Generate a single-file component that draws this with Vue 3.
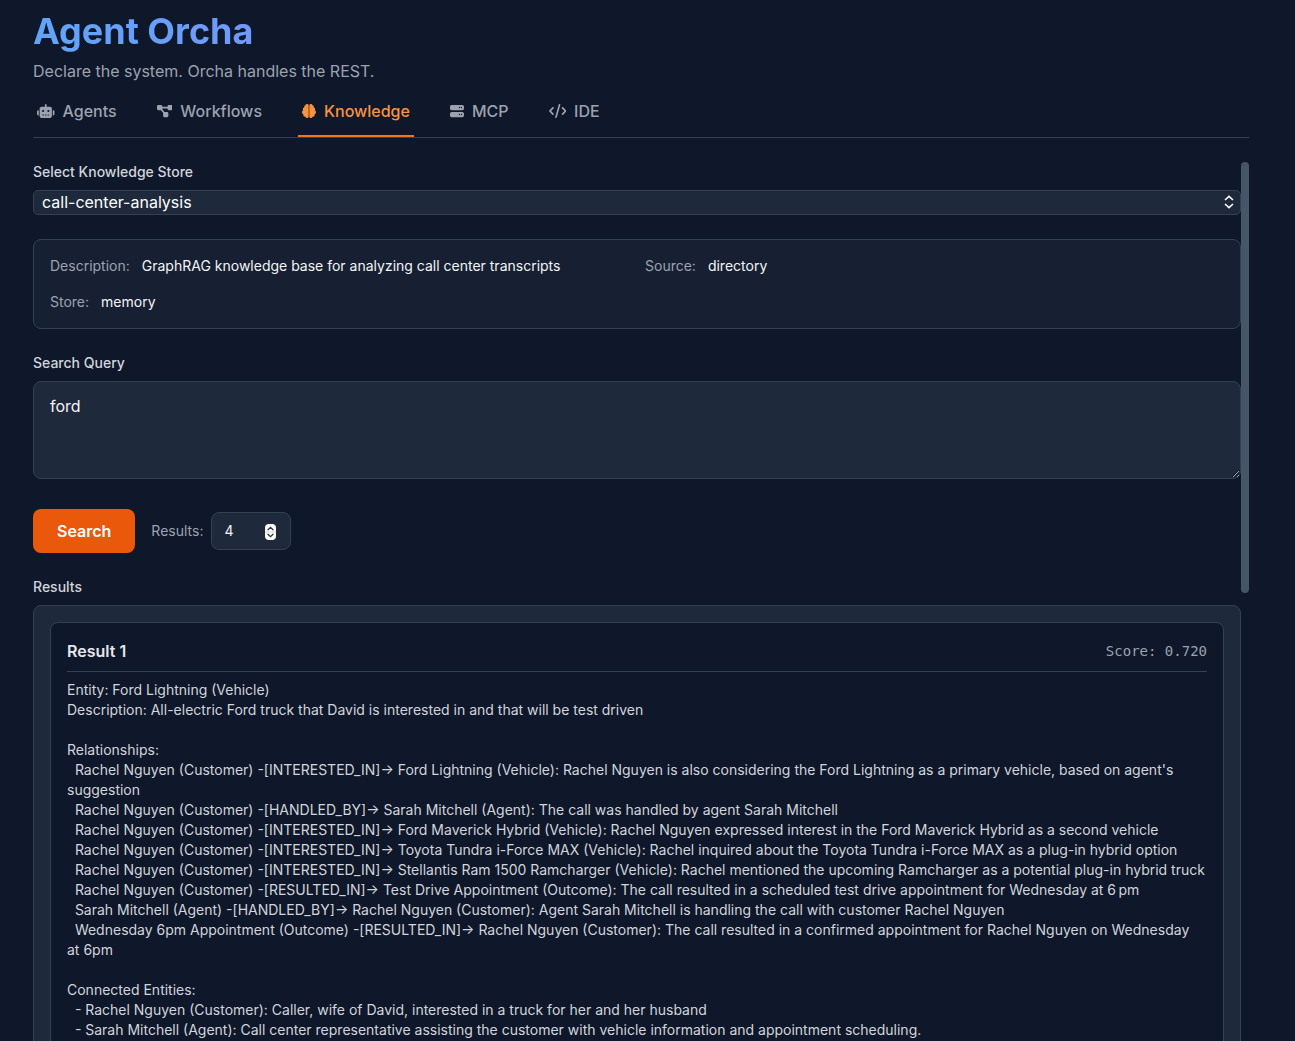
<template>
  <div class="page">
    <header class="header">
      <h1>Agent Orcha</h1>
      <p class="tagline">Declare the system. Orcha handles the REST.</p>
    </header>

    <nav class="tabs">
      <button
        v-for="tab in tabs"
        :key="tab.name"
        type="button"
        class="tab"
        :class="{ active: tab.name === activeTab }"
        @click="activeTab = tab.name"
      >
        <svg class="tab-icon" :viewBox="`0 0 ${tab.width} 512`" aria-hidden="true">
          <path v-if="tab.name === 'Knowledge'" class="brain-gap" d="M230 20H282V492H230Z" />
          <path :d="tab.path" />
        </svg>
        <span>{{ tab.name }}</span>
      </button>
    </nav>

    <div class="body">
      <main class="content">
        <section class="group">
          <label for="store">Select Knowledge Store</label>
          <div class="select-wrap">
            <select id="store" v-model="store">
              <option>call-center-analysis</option>
            </select>
            <svg class="select-arrows" viewBox="0 0 10 14" aria-hidden="true">
              <path d="M1 5 5 1.400 9 5M1 9 5 12.600 9 9" />
            </svg>
          </div>
        </section>

        <section class="info">
          <div v-for="item in info" :key="item.label" class="info-item">
            <span class="info-label">{{ item.label }}</span>
            <span>{{ item.value }}</span>
          </div>
        </section>

        <section class="group">
          <label for="query">Search Query</label>
          <textarea id="query" v-model="query"></textarea>
        </section>

        <div class="actions">
          <button type="button" class="search">Search</button>
          <label for="count" class="count-label">Results:</label>
          <div class="count-wrap">
            <input id="count" v-model.number="count" type="number" min="1" />
            <svg class="stepper" viewBox="0 0 11 16" aria-hidden="true">
              <rect width="11" height="16" rx="4" fill="#fff" />
              <path d="M0 8H11" stroke="#d4d4d4" />
              <path d="M3 5.7 5.5 3.3 8 5.7M3 10.3 5.5 12.7 8 10.3" stroke="#333" stroke-width="1.3" fill="none" stroke-linecap="round" />
            </svg>
          </div>
        </div>

        <h2>Results</h2>
        <div class="results">
          <article class="result">
            <div class="result-head">
              <h3>Result 1</h3>
              <span class="score">Score: 0.720</span>
            </div>
            <div class="result-text">{{ resultText }}</div>
          </article>
        </div>
      </main>
      <div class="scrollbar"><div class="thumb"></div></div>
    </div>
  </div>
</template>

<script setup>
import { ref } from 'vue'

const activeTab = ref('Knowledge')
const store = ref('call-center-analysis')
const query = ref('ford')
const count = ref(4)

const tabs = [
  {
    name: 'Agents',
    width: 640,
    path: 'M320 0c17.700 0 32 14.300 32 32V96H472c39.800 0 72 32.200 72 72V440c0 39.800-32.200 72-72 72H168c-39.800 0-72-32.200-72-72V168c0-39.800 32.200-72 72-72H288V32c0-17.700 14.300-32 32-32zM208 384c-8.800 0-16 7.200-16 16s7.200 16 16 16h32c8.800 0 16-7.200 16-16s-7.200-16-16-16H208zm96 0c-8.800 0-16 7.200-16 16s7.200 16 16 16h32c8.800 0 16-7.200 16-16s-7.200-16-16-16H304zm96 0c-8.800 0-16 7.200-16 16s7.200 16 16 16h32c8.800 0 16-7.200 16-16s-7.200-16-16-16H400zM264 256a40 40 0 1 0-80 0 40 40 0 1 0 80 0zm152 40a40 40 0 1 0 0-80 40 40 0 1 0 0 80zM48 224H64V416H48c-26.500 0-48-21.500-48-48V272c0-26.500 21.500-48 48-48zm544 0c26.500 0 48 21.500 48 48v96c0 26.500-21.500 48-48 48H576V224h16z'
  },
  {
    name: 'Workflows',
    width: 576,
    path: 'M0 80C0 53.500 21.500 32 48 32h96c26.500 0 48 21.500 48 48V96H384V80c0-26.500 21.500-48 48-48h96c26.500 0 48 21.500 48 48v96c0 26.500-21.500 48-48 48H432c-26.500 0-48-21.500-48-48V160H192v16c0 1.700-.1 3.400-.3 5L272 288h96c26.500 0 48 21.500 48 48v96c0 26.500-21.500 48-48 48H272c-26.500 0-48-21.500-48-48V336c0-1.700.1-3.400.3-5L144 224H48c-26.500 0-48-21.500-48-48V80z'
  },
  {
    name: 'Knowledge',
    width: 512,
    path: 'M184 0c30.900 0 56 25.100 56 56V456c0 30.900-25.100 56-56 56c-28.900 0-52.700-21.900-55.700-50.100c-5.200 1.400-10.700 2.100-16.300 2.100c-35.300 0-64-28.700-64-64c0-7.400 1.300-14.600 3.600-21.200C21.400 367.400 0 338.200 0 304c0-31.900 18.700-59.500 45.800-72.300C37.100 220.800 32 207 32 192c0-30.700 21.600-56.300 50.400-62.600C80.800 123.900 80 118 80 112c0-29.900 20.600-55.100 48.300-62.100C131.300 21.900 155.100 0 184 0zM328 0c28.900 0 52.600 21.900 55.700 49.900c27.800 7 48.300 32.100 48.300 62.100c0 6-.8 11.900-2.400 17.400c28.800 6.200 50.400 31.900 50.400 62.600c0 15-5.100 28.800-13.800 39.700C493.300 244.500 512 272.100 512 304c0 34.200-21.400 63.400-51.600 74.800c2.300 6.600 3.600 13.800 3.600 21.200c0 35.300-28.700 64-64 64c-5.600 0-11.100-.7-16.300-2.100c-3 28.200-26.800 50.100-55.700 50.100c-30.900 0-56-25.100-56-56V56c0-30.900 25.100-56 56-56z'
  },
  {
    name: 'MCP',
    width: 512,
    path: 'M64 32C28.700 32 0 60.700 0 96v64c0 35.300 28.700 64 64 64H448c35.300 0 64-28.700 64-64V96c0-35.300-28.700-64-64-64H64zm280 72a24 24 0 1 1 0 48 24 24 0 1 1 0-48zm48 24a24 24 0 1 1 48 0 24 24 0 1 1-48 0zM64 288c-35.300 0-64 28.700-64 64v64c0 35.300 28.700 64 64 64H448c35.300 0 64-28.700 64-64V352c0-35.300-28.700-64-64-64H64zm280 72a24 24 0 1 1 0 48 24 24 0 1 1 0-48zm56 24a24 24 0 1 1 48 0 24 24 0 1 1-48 0z'
  },
  {
    name: 'IDE',
    width: 640,
    path: 'M392.800 1.200c-17-4.900-34.700 5-39.600 22l-128 448c-4.900 17 5 34.700 22 39.600s34.700-5 39.600-22l128-448c4.900-17-5-34.700-22-39.600zm80.600 120.100c-12.500 12.500-12.500 32.800 0 45.300L562.700 256l-89.400 89.400c-12.500 12.500-12.500 32.800 0 45.300s32.800 12.500 45.300 0l112-112c12.500-12.500 12.500-32.800 0-45.300l-112-112c-12.500-12.500-32.800-12.500-45.300 0zm-306.700 0c-12.500-12.500-32.800-12.500-45.300 0l-112 112c-12.500 12.500-12.500 32.800 0 45.300l112 112c12.500 12.500 32.800 12.500 45.300 0s12.500-32.800 0-45.300L77.300 256l89.400-89.400c12.500-12.500 12.500-32.800 0-45.300z'
  }
]

const info = [
  { label: 'Description:', value: 'GraphRAG knowledge base for analyzing call center transcripts' },
  { label: 'Source:', value: 'directory' },
  { label: 'Store:', value: 'memory' }
]

const resultText = `Entity: Ford Lightning (Vehicle)
Description: All-electric Ford truck that David is interested in and that will be test driven

Relationships:
  Rachel Nguyen (Customer) -[INTERESTED_IN]-> Ford Lightning (Vehicle): Rachel Nguyen is also considering the Ford Lightning as a primary vehicle, based on agent's suggestion
  Rachel Nguyen (Customer) -[HANDLED_BY]-> Sarah Mitchell (Agent): The call was handled by agent Sarah Mitchell
  Rachel Nguyen (Customer) -[INTERESTED_IN]-> Ford Maverick Hybrid (Vehicle): Rachel Nguyen expressed interest in the Ford Maverick Hybrid as a second vehicle
  Rachel Nguyen (Customer) -[INTERESTED_IN]-> Toyota Tundra i-Force MAX (Vehicle): Rachel inquired about the Toyota Tundra i-Force MAX as a plug-in hybrid option
  Rachel Nguyen (Customer) -[INTERESTED_IN]-> Stellantis Ram 1500 Ramcharger (Vehicle): Rachel mentioned the upcoming Ramcharger as a potential plug-in hybrid truck
  Rachel Nguyen (Customer) -[RESULTED_IN]-> Test Drive Appointment (Outcome): The call resulted in a scheduled test drive appointment for Wednesday at 6\u202fpm
  Sarah Mitchell (Agent) -[HANDLED_BY]-> Rachel Nguyen (Customer): Agent Sarah Mitchell is handling the call with customer Rachel Nguyen
  Wednesday 6pm Appointment (Outcome) -[RESULTED_IN]-> Rachel Nguyen (Customer): The call resulted in a confirmed appointment for Rachel Nguyen on Wednesday at\u00a06pm

Connected Entities:
  - Rachel Nguyen (Customer): Caller, wife of David, interested in a truck for her and her husband
  - Sarah Mitchell (Agent): Call center representative assisting the customer with vehicle information and appointment scheduling.`
</script>

<style>
body {
  margin: 0;
  background: #0f172a;
}
</style>

<style scoped>
.page {
  box-sizing: border-box;
  height: 100vh;
  padding: 9px 46px 0 33px;
  display: flex;
  flex-direction: column;
  overflow: hidden;
  background: #0f172a;
  color: #f3f4f6;
  font-family: Inter, sans-serif;
  font-size: 16px;
  line-height: 24px;
}
* {
  box-sizing: border-box;
}
h1, h2, h3, p {
  margin: 0;
}
button, input, select, textarea {
  font-family: inherit;
  font-size: 16px;
}
h1 {
  font-size: 36px;
  line-height: 45px;
  font-weight: 700;
  color: transparent;
  background: linear-gradient(90deg, #60a5fa, #818cf8 40%, #a78bfa);
  background-clip: text;
}
.tagline {
  margin-top: 5px;
  color: #9ca3af;
}
.tabs {
  display: flex;
  flex-shrink: 0;
  gap: 32px;
  margin-top: 8px;
  border-bottom: 1px solid #334155;
}
.tab {
  display: flex;
  align-items: center;
  gap: 8px;
  height: 46px;
  padding: 0 4px 4px;
  border: none;
  border-bottom: 2px solid transparent;
  background: none;
  color: #9ca3af;
  font-weight: 500;
  cursor: pointer;
}
.tab.active {
  color: #fb923c;
  border-bottom-color: #f97316;
}
.tab-icon {
  height: 14px;
  fill: currentColor;
}
.brain-gap {
  opacity: 0.4;
}
.body {
  display: flex;
  flex: 1;
  min-height: 0;
  margin-top: 24px;
}
.content {
  flex: 1;
  min-width: 0;
}
.scrollbar {
  width: 8px;
}
.thumb {
  height: 49%;
  border-radius: 4px;
  background: #475569;
}
label, h2 {
  display: block;
  margin-bottom: 8px;
  color: #d1d5db;
  font-size: 14px;
  line-height: 20px;
  font-weight: 500;
}
.select-wrap, .count-wrap {
  position: relative;
}
select {
  appearance: none;
  display: block;
  width: 100%;
  height: 25px;
  padding: 0 8px 2px;
  border: 1px solid #334155;
  border-radius: 5px;
  background: #1e293b;
  color: #fff;
}
.select-arrows {
  position: absolute;
  right: 7px;
  top: 5px;
  width: 10px;
  height: 14px;
  fill: none;
  stroke: #fff;
  stroke-width: 1.6;
}
.info {
  display: grid;
  grid-template-columns: 1fr 1fr;
  gap: 16px;
  margin: 24px 0;
  padding: 16px;
  border: 1px solid #334155;
  border-radius: 8px;
  background: #162032;
  font-size: 14px;
  line-height: 20px;
}
.info-item {
  display: flex;
  gap: 12px;
}
.info-label {
  color: #9ca3af;
}
textarea {
  display: block;
  width: 100%;
  height: 98px;
  padding: 12px 16px;
  border: 1px solid #334155;
  border-radius: 8px;
  background: #1e293b;
  color: #f3f4f6;
  line-height: 24px;
  resize: vertical;
}
.actions {
  display: flex;
  align-items: center;
  margin: 30px 0 24px;
}
.search {
  height: 44px;
  padding: 0 24px;
  border: none;
  border-radius: 8px;
  background: #ea580c;
  color: #fff;
  font-weight: 600;
  cursor: pointer;
}
.count-label {
  margin: 0 8px 0 16px;
  color: #9ca3af;
  font-weight: 400;
}
input {
  appearance: textfield;
  display: block;
  width: 80px;
  height: 38px;
  padding: 0 12px 2px;
  border: 1px solid #334155;
  border-radius: 8px;
  background: #1e293b;
  color: #f3f4f6;
  font-size: 14px;
}
input::-webkit-inner-spin-button {
  appearance: none;
}
.stepper {
  position: absolute;
  right: 15px;
  top: 12px;
  width: 11px;
  height: 16px;
}
.results {
  padding: 16px;
  border: 1px solid #334155;
  border-radius: 8px;
  background: #1e293b;
}
.result {
  padding: 16px;
  border: 1px solid #334155;
  border-radius: 8px;
  background: #0f172a;
}
.result-head {
  display: flex;
  align-items: center;
  justify-content: space-between;
  padding-bottom: 8px;
  border-bottom: 1px solid #334155;
}
h3 {
  color: #e5e7eb;
  font-size: 16px;
  font-weight: 600;
}
.score {
  color: #9ca3af;
  font-family: "DejaVu Sans Mono", monospace;
  font-size: 14px;
}
.result-text {
  margin-top: 8px;
  color: #d1d5db;
  font-size: 14px;
  line-height: 20px;
  white-space: pre-wrap;
}
</style>
